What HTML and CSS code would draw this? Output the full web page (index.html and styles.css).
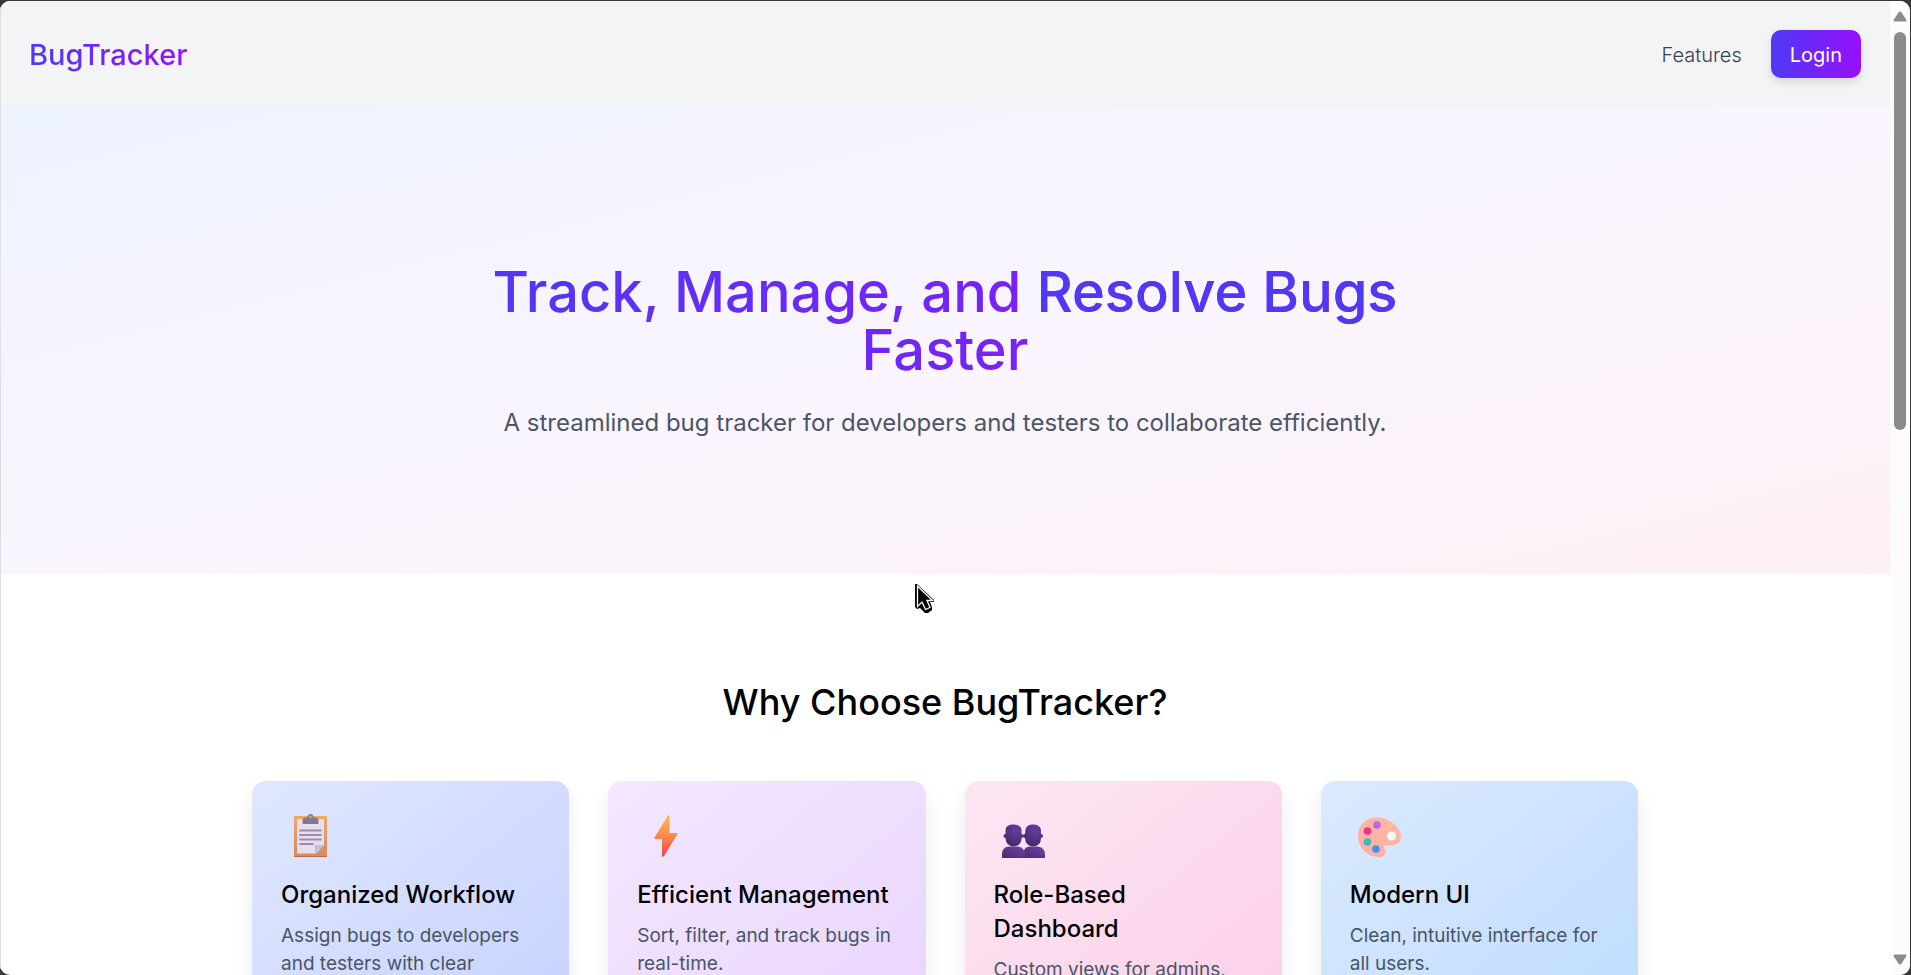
FILE: index.html
```html
<!DOCTYPE html>
<html lang="en">
<head>
<meta charset="utf-8">
<title>BugTracker</title>
<link rel="stylesheet" href="styles.css">
</head>
<body>
<div class="window">
  <div class="page">
    <header class="navbar">
      <a class="logo" href="#">BugTracker</a>
      <nav class="nav">
        <a class="nav-link" href="#features">Features</a>
        <button class="login" type="button">Login</button>
      </nav>
    </header>
    <main>
      <section class="hero">
        <h1 class="hero-title">Track, Manage, and <span class="accent">Resolve Bugs</span> Faster</h1>
        <p class="hero-text">A streamlined bug tracker for developers and testers to collaborate efficiently.</p>
      </section>
      <section class="features" id="features">
        <h2 class="features-title">Why Choose BugTracker?</h2>
        <div class="cards">
          <article class="card card-indigo">
            <svg class="icon" viewBox="0 0 58 48" aria-hidden="true">
              <defs><linearGradient id="board" x1="0" y1="0" x2="0" y2="1"><stop offset="0" stop-color="#efa767"/><stop offset="1" stop-color="#d98a58"/></linearGradient></defs>
              <rect x="13" y="6" width="33" height="41" rx="1" fill="url(#board)"/>
              <path d="M13 46h33v1H13z" fill="#bd6550"/>
              <path d="M16 9h27v26l-8 8.500H16z" fill="#e7def1"/>
              <path d="M34 43.500V35h9z" fill="#c5bbd6"/>
              <path d="M21.500 14v-4q0-2 3-2.500h2q0-3.500 3-3.500t3 3.500h2q3 .5 3 2.500v4z" fill="#85798f"/>
              <circle cx="29.500" cy="7" r="1.200" fill="#efa767"/>
              <path d="M19 20.500h21M19 25h21M19 29.500h21M19 34h13" stroke="#998da8" stroke-width="1.800" stroke-linecap="round"/>
            </svg>
            <h3 class="card-title">Organized Workflow</h3>
            <p class="card-text">Assign bugs to developers and testers with clear ownership.</p>
          </article>
          <article class="card card-purple">
            <svg class="icon" viewBox="0 0 58 48" aria-hidden="true">
              <defs><linearGradient id="bolt" x1="0" y1="0" x2="0" y2="1"><stop offset="0" stop-color="#fdb74c"/><stop offset=".5" stop-color="#fb8b47"/><stop offset="1" stop-color="#f0404f"/></linearGradient></defs>
              <path d="M31 5.500q1.500-1 1.500 1V23h7.500q1 0 .5 1L27 46q-2 2-2-.5V29h-7q-1.200 0-.6-1.200z" fill="url(#bolt)"/>
            </svg>
            <h3 class="card-title">Efficient Management</h3>
            <p class="card-text">Sort, filter, and track bugs in real-time.</p>
          </article>
          <article class="card card-pink">
            <svg class="icon" viewBox="0 0 58 48" aria-hidden="true">
              <defs>
                <radialGradient id="head" cx=".65" cy=".2" r=".9"><stop offset="0" stop-color="#65409d"/><stop offset="1" stop-color="#402768"/></radialGradient>
                <linearGradient id="torso" x1="0" y1="1" x2="1" y2="0"><stop offset="0" stop-color="#46296d"/><stop offset="1" stop-color="#6d46a5"/></linearGradient>
              </defs>
              <path d="M29 48v-4q0-6 6-7.500h9q7 1.500 7 8V48z" fill="url(#torso)"/>
              <path d="M31.500 20q.5-5.500 7.500-5.500t8 5.500v4q2 0 2 2t-2 2q0 8-8 8.500-7.500-.5-8-8.500-2 0-2-2t2-2z" fill="url(#head)"/>
              <path d="M8 48v-4q0-6 6-7.500h10q7 1.500 7 8V48z" fill="url(#torso)"/>
              <path d="M11.500 20q.5-5.500 8-5.500t8 5.500v4q2 0 2 2t-2 2q0 8-8 8.500-7.500-.5-8-8.500-2 0-2-2t2-2z" fill="url(#head)"/>
            </svg>
            <h3 class="card-title">Role-Based Dashboard</h3>
            <p class="card-text">Custom views for admins, developers, and testers.</p>
          </article>
          <article class="card card-blue">
            <svg class="icon" viewBox="0 0 58 48" aria-hidden="true">
              <defs><linearGradient id="palette" x1="1" y1="0" x2="0" y2="1"><stop offset="0" stop-color="#fcc19b"/><stop offset=".25" stop-color="#feb5a4"/><stop offset=".85" stop-color="#ffb0a5"/><stop offset="1" stop-color="#ee8b98"/></linearGradient></defs>
              <path d="M27 7.500c11 0 24 9 24 19 0 6-4.500 9-10 9h-6c-3 0 .5 3 .5 6 0 3.500-2.500 5.500-6 5.500C19 47 8 38.500 8 26 8 14.500 16.500 7.500 27 7.500z" fill="url(#palette)"/>
              <circle cx="41.500" cy="26" r="4.900" fill="#f3f9ff" stroke="#f3b39e" stroke-width=".7"/>
              <circle cx="27" cy="15" r="3.800" fill="#bd63ed"/>
              <circle cx="17.500" cy="21" r="3.800" fill="#f52e8b"/>
              <circle cx="17.500" cy="32" r="3.800" fill="#44b6b4"/>
              <circle cx="26" cy="39" r="3.800" fill="#428fef"/>
            </svg>
            <h3 class="card-title">Modern UI</h3>
            <p class="card-text">Clean, intuitive interface for all users.</p>
          </article>
        </div>
      </section>
    </main>
  </div>
  <div class="scrollbar" aria-hidden="true">
    <svg class="arrow" viewBox="0 0 14 11"><path d="M5.500 1.500q1.500-2 3 0l4.700 7q.8 2-1 2H1.800q-1.800 0-1-2z"/></svg>
    <div class="track"><div class="thumb"></div></div>
    <svg class="arrow" viewBox="0 0 14 11"><path d="M5.500 9.500q1.500 2 3 0l4.700-7q.8-2-1-2H1.800q-1.800 0-1 2z"/></svg>
  </div>
</div>
<svg class="cursor" viewBox="0 0 20 30" aria-hidden="true">
  <path d="M1 1h2l17 16v2h-4l2 5v3l-4 3h-3l-5-5-3 1-2-2z" fill="#000"/>
  <path d="M3.500 3v20.500l4.500-4.500 3.500 7.500 4.500-2-3-7h5.500z" fill="#000" stroke="#fff" stroke-width="1.300"/>
</svg>
</body>
</html>
```

FILE: styles.css
```css
* { box-sizing: border-box; margin: 0; }

body {
  height: 100vh;
  padding-top: 1px;
  background: #39393b;
  font-family: Inter, "Liberation Sans", sans-serif;
  font-size: 19px;
  font-weight: 400;
  line-height: 28px;
  overflow: hidden;
}

.window {
  position: relative;
  display: flex;
  height: 100%;
  margin-right: 1px;
  border-radius: 10px;
  background: #fff;
  overflow: hidden;
}

.window::before {
  content: "";
  position: absolute;
  inset: 0 auto 0 0;
  width: 1px;
  background: #dfdfe3;
}

.page { flex: 1; min-width: 0; overflow: hidden; }

.navbar {
  display: flex;
  align-items: center;
  justify-content: space-between;
  padding: 29px;
  background: #f3f4f6;
}

.logo {
  padding-top: 2px;
  background: linear-gradient(to right, #4f39f6, #9810fa);
  background-clip: text;
  color: transparent;
  font-size: 29px;
  font-weight: 500;
  line-height: 38px;
  text-decoration: none;
}

.nav { display: flex; align-items: center; gap: 29px; font-size: 20px; font-weight: 300; }
.nav-link { padding-top: 2px; color: #364153; text-decoration: none; }

.login {
  padding: 11px 19px 9px;
  border: 0;
  border-radius: 10px;
  background: linear-gradient(to right, #4f39f6, #9810fa);
  box-shadow: 0 4px 8px rgba(0, 0, 0, 0.12);
  color: #fff;
  font: inherit;
  font-weight: 400;
}

.hero {
  padding: 156px 29px 134px;
  background: linear-gradient(to bottom right, #edf3ff, #faf5ff 50%, #fdf0f5);
  text-align: center;
}

.hero-title {
  max-width: 1040px;
  margin: 0 auto 27px;
  background: linear-gradient(to right, #4f39f6, #9810fa);
  background-clip: text;
  color: transparent;
  font-size: 56px;
  font-weight: 500;
  line-height: 58px;
}

.accent { color: #4f39f6; }

.hero-text { color: #4a5565; font-size: 24px; line-height: 34px; }

.features { padding: 107px 29px; }

.features-title {
  margin-bottom: 57px;
  color: #000;
  font-size: 36px;
  font-weight: 500;
  line-height: 43px;
  text-align: center;
}

.cards {
  display: grid;
  grid-template-columns: repeat(4, 1fr);
  gap: 39px;
  max-width: 1386px;
  margin: 0 auto;
}

.card {
  padding: 29px;
  border-radius: 14px;
  box-shadow: 0 10px 18px rgba(0, 0, 0, 0.08);
}

.card-indigo { background: linear-gradient(to bottom right, #e0e7ff, #c6d2ff); }
.card-purple { background: linear-gradient(to bottom right, #f3e8ff, #e9d4ff); }
.card-pink { background: linear-gradient(to bottom right, #fce7f3, #fccee8); }
.card-blue { background: linear-gradient(to bottom right, #dbeafe, #bedbff); }

.icon { display: block; width: 58px; height: 48px; margin-bottom: 20px; }

.card-title {
  margin-bottom: 10px;
  color: #000;
  font-size: 24px;
  font-weight: 500;
  line-height: 34px;
}

.card-text { color: #4a5565; }

.scrollbar {
  display: flex;
  flex-direction: column;
  align-items: center;
  width: 20px;
  padding: 10px 0;
  background: #fcfcfc;
}

.arrow { width: 14px; height: 11px; fill: #8b8b8b; }
.track { flex: 1; width: 12px; padding: 10px 0; }
.thumb { height: 43.6%; border-radius: 6px; background: #8b8b8b; }

.cursor { position: absolute; top: 583px; left: 914px; width: 20px; height: 30px; }
```
